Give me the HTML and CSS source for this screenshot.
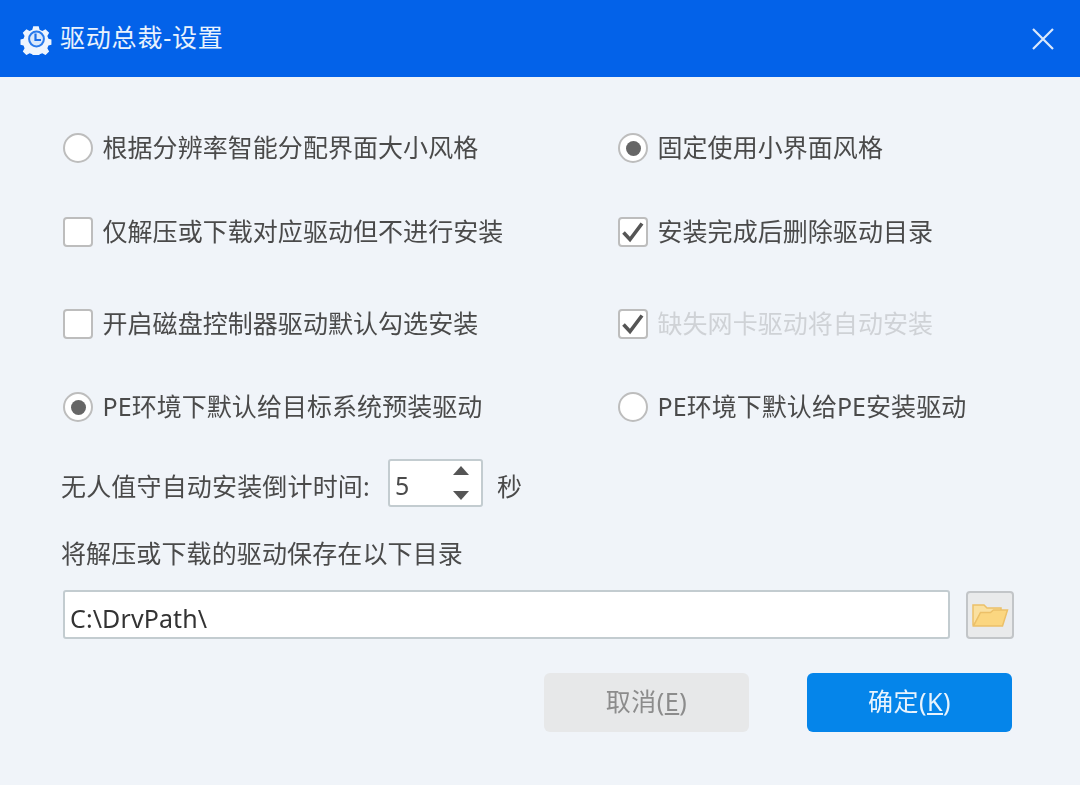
FILE: index.html
```html
<!DOCTYPE html>
<html lang="zh-CN">
<head>
<meta charset="utf-8">
<title>驱动总裁-设置</title>
<link rel="stylesheet" href="styles.css">
</head>
<body>
<div class="dialog">
  <header class="titlebar">
    <div class="title-left">
      <svg class="logo" viewBox="0 0 32 32" width="32" height="32">
        <path fill="#eef5fe" d="M13 2h6l1 4 3 1.300 3.500-2 4 4-2 3.500 1.200 3 3.300.9v5.600l-3.300 1-1.200 3 2 3.400-4 4-3.500-2-3 1.200-1 3.300h-6l-1-3.300-3-1.200-3.500 2-4-4 2-3.400-1.200-3-3.300-1v-5.600l3.300-.9 1.200-3-2-3.500 4-4 3.500 2 3-1.300z" transform="translate(1.400 1.400) scale(.91)"/>
        <circle cx="16.500" cy="16" r="7.400" fill="#dbe9fb" stroke="#2a7bec" stroke-width="2"/>
        <path d="M15.500 10.500v6.500h5.500" fill="none" stroke="#1a6fea" stroke-width="2.200"/>
      </svg>
      <span class="title-text">驱动总裁-设置</span>
    </div>
    <svg class="close" viewBox="0 0 24 24" width="24" height="24">
      <path d="M2 2l20 20M22 2L2 22" stroke="#dbe8fb" stroke-width="2.200" fill="none"/>
    </svg>
  </header>

  <main class="content">
    <section class="options">
      <label class="option"><span class="radio"></span><span class="text">根据分辨率智能分配界面大小风格</span></label>
      <label class="option"><span class="radio on"></span><span class="text">固定使用小界面风格</span></label>
      <label class="option"><span class="check"></span><span class="text">仅解压或下载对应驱动但不进行安装</span></label>
      <label class="option"><span class="check"><svg viewBox="0 0 28 28" width="28" height="28"><path d="M4.500 14.500l6.500 7L23 5.500" fill="none" stroke="#555" stroke-width="3.600"/></svg></span><span class="text">安装完成后删除驱动目录</span></label>
      <label class="option"><span class="check"></span><span class="text">开启磁盘控制器驱动默认勾选安装</span></label>
      <label class="option disabled"><span class="check"><svg viewBox="0 0 28 28" width="28" height="28"><path d="M4.500 14.500l6.500 7L23 5.500" fill="none" stroke="#555" stroke-width="3.600"/></svg></span><span class="text">缺失网卡驱动将自动安装</span></label>
      <label class="option"><span class="radio on"></span><span class="text">PE环境下默认给目标系统预装驱动</span></label>
      <label class="option"><span class="radio"></span><span class="text">PE环境下默认给PE安装驱动</span></label>
    </section>

    <div class="timer-row">
      <span class="timer-text">无人值守自动安装倒计时间:</span>
      <div class="spinner">
        <span class="spin-value">5</span>
        <div class="spin-arrows">
          <span class="arrow-up"></span>
          <span class="arrow-down"></span>
        </div>
      </div>
      <span class="timer-text">秒</span>
    </div>

    <div class="path-label">将解压或下载的驱动保存在以下目录</div>

    <div class="path-row">
      <div class="path-input">C:\DrvPath\</div>
      <div class="folder-btn">
        <svg viewBox="0 0 38 30" width="38" height="30">
          <path d="M2 25V5h11l3 3h14v5H10L3 25z" fill="#fae0a0" stroke="#ecc068" stroke-width="1.500"/>
          <path d="M2.500 26l7-13.500 10 0 3-2.500 14 0-5 16z" fill="#fbd680" stroke="#ecc068" stroke-width="1.500"/>
        </svg>
      </div>
    </div>

    <div class="actions">
      <div class="btn btn-cancel"><span class="btn-text">取消(<u>E</u>)</span></div>
      <div class="btn btn-ok"><span class="btn-text">确定(<u>K</u>)</span></div>
    </div>
  </main>
</div>
</body>
</html>
```

FILE: styles.css
```css
* { box-sizing: border-box; }
html, body { margin: 0; padding: 0; }
body {
  width: 1080px;
  height: 785px;
  overflow: hidden;
  background: #f0f4f9;
  font-family: "Noto Sans", "Noto Sans CJK SC", sans-serif;
  font-size: 25px;
  color: #4a4a4a;
}
.dialog { width: 1080px; height: 785px; filter: blur(0.6px); }
.titlebar {
  height: 77px;
  background: #0362e9;
  display: flex;
  align-items: center;
  justify-content: space-between;
  padding: 0 25px 0 20px;
  color: #e9f2fd;
}
.title-left { display: flex; align-items: center; gap: 8px; }
.logo { display: block; }
.title-text { line-height: 32px; letter-spacing: .8px; margin-bottom: 4px; }
.close { display: block; }
.content { padding: 29px 66px 0 63px; }
.options {
  display: grid;
  grid-template-columns: 555px 1fr;
  grid-template-rows: 84px 84px 100px 66px;
  margin-bottom: 19px;
}
.option { display: flex; align-items: center; gap: 9.500px; line-height: 30px; white-space: nowrap; }
.option.disabled { color: #cfd2d6; }
.text { margin-bottom: 2px; letter-spacing: .05px; }
.radio {
  width: 30px; height: 30px; flex: none;
  border-radius: 50%;
  border: 2px solid #bdbdbd;
  background: #fff;
  display: flex; align-items: center; justify-content: center;
}
.radio.on::after {
  content: "";
  width: 15px; height: 15px;
  border-radius: 50%;
  background: #666;
}
.check {
  width: 30px; height: 30px; flex: none;
  border-radius: 4px;
  border: 2px solid #bdbdbd;
  background: #fff;
  display: flex; align-items: center; justify-content: center;
}
.check svg { display: block; flex: none; }
.timer-row { display: flex; align-items: center; height: 48px; margin-left: -2px; }
.timer-text { margin-top: 3px; letter-spacing: .17px; }
.spinner {
  width: 95px; height: 48px;
  margin: 0 14px 0 18px;
  background: #fff;
  border: 2px solid #c3ccd0;
  border-radius: 3px;
  display: flex; align-items: center; justify-content: space-between;
  padding: 0 12px 0 5px;
}
.spin-value { margin-top: 4px; }
.spin-arrows { display: flex; flex-direction: column; gap: 16px; margin-top: -1px; }
.arrow-up, .arrow-down { width: 0; height: 0; border-left: 8px solid transparent; border-right: 8px solid transparent; }
.arrow-up { border-bottom: 9px solid #555; }
.arrow-down { border-top: 9px solid #555; }
.path-label { margin: 28px 0 0 -2px; height: 36px; line-height: 36px; letter-spacing: .12px; }
.path-row { display: flex; align-items: center; gap: 16px; margin-top: 19px; }
.path-input {
  flex: 1; height: 49px;
  background: #fff;
  border: 2px solid #c3ccd0;
  border-radius: 3px;
  padding-left: 5px;
  line-height: 52px;
  letter-spacing: .1px;
  color: #333;
}
.folder-btn {
  width: 48px; height: 48px;
  background: #e9eaeb;
  border: 2px solid #c2c5c8;
  border-radius: 4px;
  display: flex; align-items: center; justify-content: center;
}
.actions { display: flex; justify-content: flex-end; gap: 58px; margin-top: 34px; padding-right: 2px; }
.btn {
  width: 205px; height: 59px;
  border-radius: 6px;
  display: flex; align-items: center; justify-content: center;
}
.btn-text { margin-bottom: 5px; letter-spacing: .5px; }
.btn-cancel { background: #e7e8e9; color: #8c8c8c; }
.btn-ok { background: #0585ea; color: #e8f3fd; }
```
